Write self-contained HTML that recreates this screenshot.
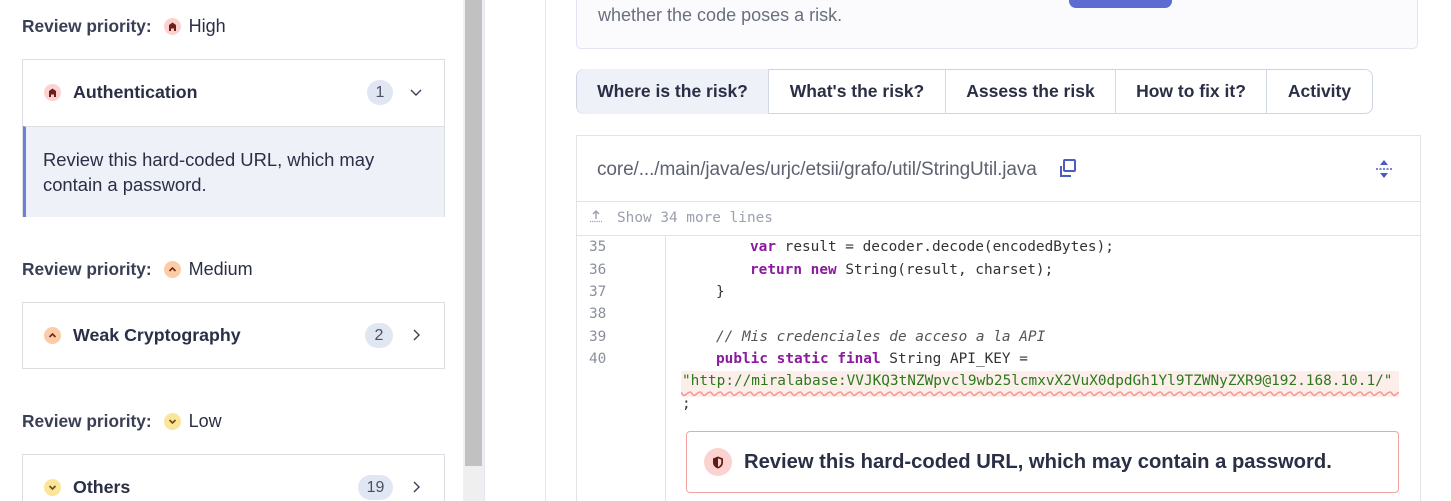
<!DOCTYPE html>
<html><head><meta charset="utf-8"><style>
*{box-sizing:border-box;margin:0;padding:0}
html,body{width:1451px;height:501px;overflow:hidden}
body{background:#fff;font-family:"Liberation Sans",sans-serif;color:#2a2f45;position:relative}
.abs{position:absolute}
.pr{position:absolute;left:22px;font-size:18px;display:flex;align-items:center}
.pr b{font-weight:bold;color:#3a3f55;margin-right:12px;font-size:17.3px}
.dot{width:17px;height:17px;border-radius:50%;display:inline-flex;align-items:center;justify-content:center;margin-right:8px}
.card{position:absolute;left:22px;width:423px;border:1px solid #dcdee3;background:#fff}
.row{height:65px;display:flex;align-items:center;padding-left:21px;font-size:17.8px;font-weight:bold;position:relative}
.badge{position:absolute;height:25px;border-radius:13px;background:#e1e6f3;font-weight:normal;font-size:16px;color:#4a4f65;display:flex;align-items:center;justify-content:center;top:20px}
.chev{position:absolute;left:386px;top:25px}
.tab{position:absolute;top:69px;height:45px;display:flex;align-items:center;justify-content:center;font-size:17.5px;font-weight:bold;color:#2a2f45;border-right:1px solid #d3d8e5}
.mono{font-family:"DejaVu Sans Mono","Liberation Mono",monospace;font-size:14.4px;color:#333;white-space:pre}
.ln{position:absolute;left:589px;color:#8a8f9a;font-family:"DejaVu Sans Mono",monospace;font-size:14.4px}
.kw{color:#8b1a9e;font-weight:bold}
</style></head><body>

<div class="pr" style="top:16px"><b>Review priority:</b><span class="dot" style="background:#fbd2cf"><svg width="9" height="9" viewBox="0 0 9 9"><path d="M1 9V3L4.5 0.5 8 3V9H6V6.5H3V9Z" fill="#6e1f1a"/></svg></span>High</div>
<div class="card" style="top:59px;height:158px">
 <div class="row"><span class="dot" style="background:#fbd2cf;margin-right:12px"><svg width="9" height="9" viewBox="0 0 9 9"><path d="M1 9V3L4.5 0.5 8 3V9H6V6.5H3V9Z" fill="#6e1f1a"/></svg></span>Authentication
  <div class="badge" style="left:344px;width:26px">1</div>
  <svg class="chev" width="14" height="14" viewBox="0 0 14 14"><path d="M2 5l5 5 5-5" stroke="#3a3f55" stroke-width="1.4" fill="none"/></svg></div>
 <div style="position:absolute;left:0;top:66px;width:421px;height:91px;background:#eef1f8;border-left:3px solid #6f7fd8;border-top:1px solid #dcdee3;padding:20px 0 0 17px;font-size:18.4px;line-height:25px;color:#2a2f45">Review this hard-coded URL, which may<br>contain a password.</div>
</div>

<div class="pr" style="top:259px"><b>Review priority:</b><span class="dot" style="background:#fccca9"><svg width="9" height="9" viewBox="0 0 9 9"><path d="M1.5 6L4.5 3 7.5 6" stroke="#6e2a10" stroke-width="1.6" fill="none"/></svg></span>Medium</div>
<div class="card" style="top:302px;height:67px">
 <div class="row"><span class="dot" style="background:#fccca9;margin-right:12px"><svg width="9" height="9" viewBox="0 0 9 9"><path d="M1.5 6L4.5 3 7.5 6" stroke="#6e2a10" stroke-width="1.6" fill="none"/></svg></span>Weak Cryptography
  <div class="badge" style="left:342px;width:28px">2</div>
  <svg class="chev" width="14" height="14" viewBox="0 0 14 14"><path d="M5 2l5 5-5 5" stroke="#3a3f55" stroke-width="1.4" fill="none"/></svg></div>
</div>

<div class="pr" style="top:411px"><b>Review priority:</b><span class="dot" style="background:#fbe59a"><svg width="9" height="9" viewBox="0 0 9 9"><path d="M1.5 3L4.5 6 7.5 3" stroke="#6e4a10" stroke-width="1.6" fill="none"/></svg></span>Low</div>
<div class="card" style="top:454px;height:60px">
 <div class="row"><span class="dot" style="background:#fbe59a;margin-right:12px"><svg width="9" height="9" viewBox="0 0 9 9"><path d="M1.5 3L4.5 6 7.5 3" stroke="#6e4a10" stroke-width="1.6" fill="none"/></svg></span>Others
  <div class="badge" style="left:335px;width:35px">19</div>
  <svg class="chev" width="14" height="14" viewBox="0 0 14 14"><path d="M5 2l5 5-5 5" stroke="#3a3f55" stroke-width="1.4" fill="none"/></svg></div>
</div>

<div class="abs" style="left:463px;top:0;width:21px;height:501px;background:#efefef"></div>
<div class="abs" style="left:465px;top:0;width:17px;height:466px;background:#c1c1c1"></div>
<div class="abs" style="left:484px;top:0;width:1px;height:501px;background:#e3e7f3"></div>
<div class="abs" style="left:545px;top:0;width:1px;height:501px;background:#e3e6ee"></div>

<div class="abs" style="left:576px;top:-20px;width:842px;height:69px;background:#fbfbfd;border:1px solid #e1e5f1;border-radius:5px"></div>
<div class="abs" style="left:598px;top:5px;font-size:18px;color:#6a6f80">whether the code poses a risk.</div>
<div class="abs" style="left:1069px;top:-10px;width:103px;height:18px;background:#5d6cd0;border-radius:7px"></div>

<div class="abs" style="left:576px;top:69px;width:797px;height:45px;border:1px solid #cfd4e3;border-radius:8px"></div>
<div class="tab" style="left:577px;width:192px;background:#eef1f8;border-radius:8px 0 0 8px">Where is the risk?</div>
<div class="tab" style="left:769px;width:177px">What's the risk?</div>
<div class="tab" style="left:946px;width:170px">Assess the risk</div>
<div class="tab" style="left:1116px;width:151px">How to fix it?</div>
<div class="tab" style="left:1267px;width:105px;border-right:none">Activity</div>

<div class="abs" style="left:576px;top:135px;width:845px;height:380px;border:1px solid #e1e3e8"></div>
<div class="abs" style="left:597px;top:159px;font-size:19px;color:#5d6270;letter-spacing:-0.1px">core/.../main/java/es/urjc/etsii/grafo/util/StringUtil.java</div>
<svg class="abs" style="left:1057px;top:158px" width="22" height="22" viewBox="0 0 22 22"><rect x="7" y="2" width="11" height="11" rx="1" stroke="#4c5bc2" stroke-width="2" fill="none"/><path d="M4 8v10h10" stroke="#4c5bc2" stroke-width="2" fill="none"/></svg>
<svg class="abs" style="left:1374px;top:158px" width="20" height="22" viewBox="0 0 20 22"><path d="M10 2l-4 5h8z M10 20l-4-5h8z" fill="#4c5bc2"/><path d="M2 11h16" stroke="#4c5bc2" stroke-width="1.6" stroke-dasharray="2 1.5"/></svg>
<div class="abs" style="left:577px;top:201px;width:843px;height:1px;background:#e1e3e8"></div>
<svg class="abs" style="left:589px;top:209px" width="14" height="14" viewBox="0 0 14 14"><path d="M7 2v8M4 5l3-3 3 3" stroke="#9aa0ad" stroke-width="1.4" fill="none"/><path d="M1 12.5h12" stroke="#9aa0ad" stroke-width="1.2" stroke-dasharray="1.2 1"/></svg>
<div class="abs mono" style="left:617px;top:210px;color:#9aa0ad">Show 34 more lines</div>
<div class="abs" style="left:577px;top:235px;width:843px;height:1px;background:#e1e3e8"></div>
<div class="abs" style="left:665px;top:236px;width:1px;height:265px;background:#e1e3e8"></div>

<div class="ln" style="top:239px">35</div>
<div class="ln" style="top:262px">36</div>
<div class="ln" style="top:284px">37</div>
<div class="ln" style="top:306px">38</div>
<div class="ln" style="top:329px">39</div>
<div class="ln" style="top:351px">40</div>

<div class="abs mono" style="left:750px;top:239px"><span class="kw">var</span> result = decoder.decode(encodedBytes);</div>
<div class="abs mono" style="left:750px;top:262px"><span class="kw">return</span> <span class="kw">new</span> String(result, charset);</div>
<div class="abs mono" style="left:716px;top:284px">}</div>
<div class="abs mono" style="left:716px;top:329px;font-style:italic;color:#555">// Mis credenciales de acceso a la API</div>
<div class="abs mono" style="left:716px;top:351px"><span class="kw">public</span> <span class="kw">static</span> <span class="kw">final</span> String API_KEY =</div>
<div class="abs" style="left:681px;top:371px;width:718px;height:26px;background:#fdeeec"></div>
<div class="abs mono" style="left:682px;top:373px;color:#2a7a1a">"http://miralabase:VVJKQ3tNZWpvcl9wb25lcmxvX2VuX0dpdGh1Yl9TZWNyZXR9@192.168.10.1/"</div>
<svg class="abs" style="left:681px;top:390px" width="718" height="8"><defs><pattern id="w" width="10" height="8" patternUnits="userSpaceOnUse"><path d="M0 2 Q2.5 7 5 4.5 T10 2" stroke="#f59a92" stroke-width="1.6" fill="none"/></pattern></defs><rect width="718" height="8" fill="url(#w)"/></svg>
<div class="abs mono" style="left:682px;top:396px">;</div>

<div class="abs" style="left:686px;top:431px;width:713px;height:62px;border:1px solid #f5a3a0;border-radius:4px"></div>
<div class="abs" style="left:704px;top:448px;width:28px;height:28px;border-radius:50%;background:#fbd2cf;display:flex;align-items:center;justify-content:center"><svg width="12" height="13" viewBox="0 0 12 13"><path d="M6 0.5L11 2.5V6.5C11 9.5 8.8 11.6 6 12.5 3.2 11.6 1 9.5 1 6.5V2.5Z" fill="#5e1a16"/><path d="M6 2.2V10.8C7.8 10 9.3 8.5 9.3 6.5V3.6Z" fill="#fbd2cf"/></svg></div>
<div class="abs" style="left:744px;top:451px;font-size:20.2px;font-weight:bold;color:#2a2f45">Review this hard-coded URL, which may contain a password.</div>

</body></html>
